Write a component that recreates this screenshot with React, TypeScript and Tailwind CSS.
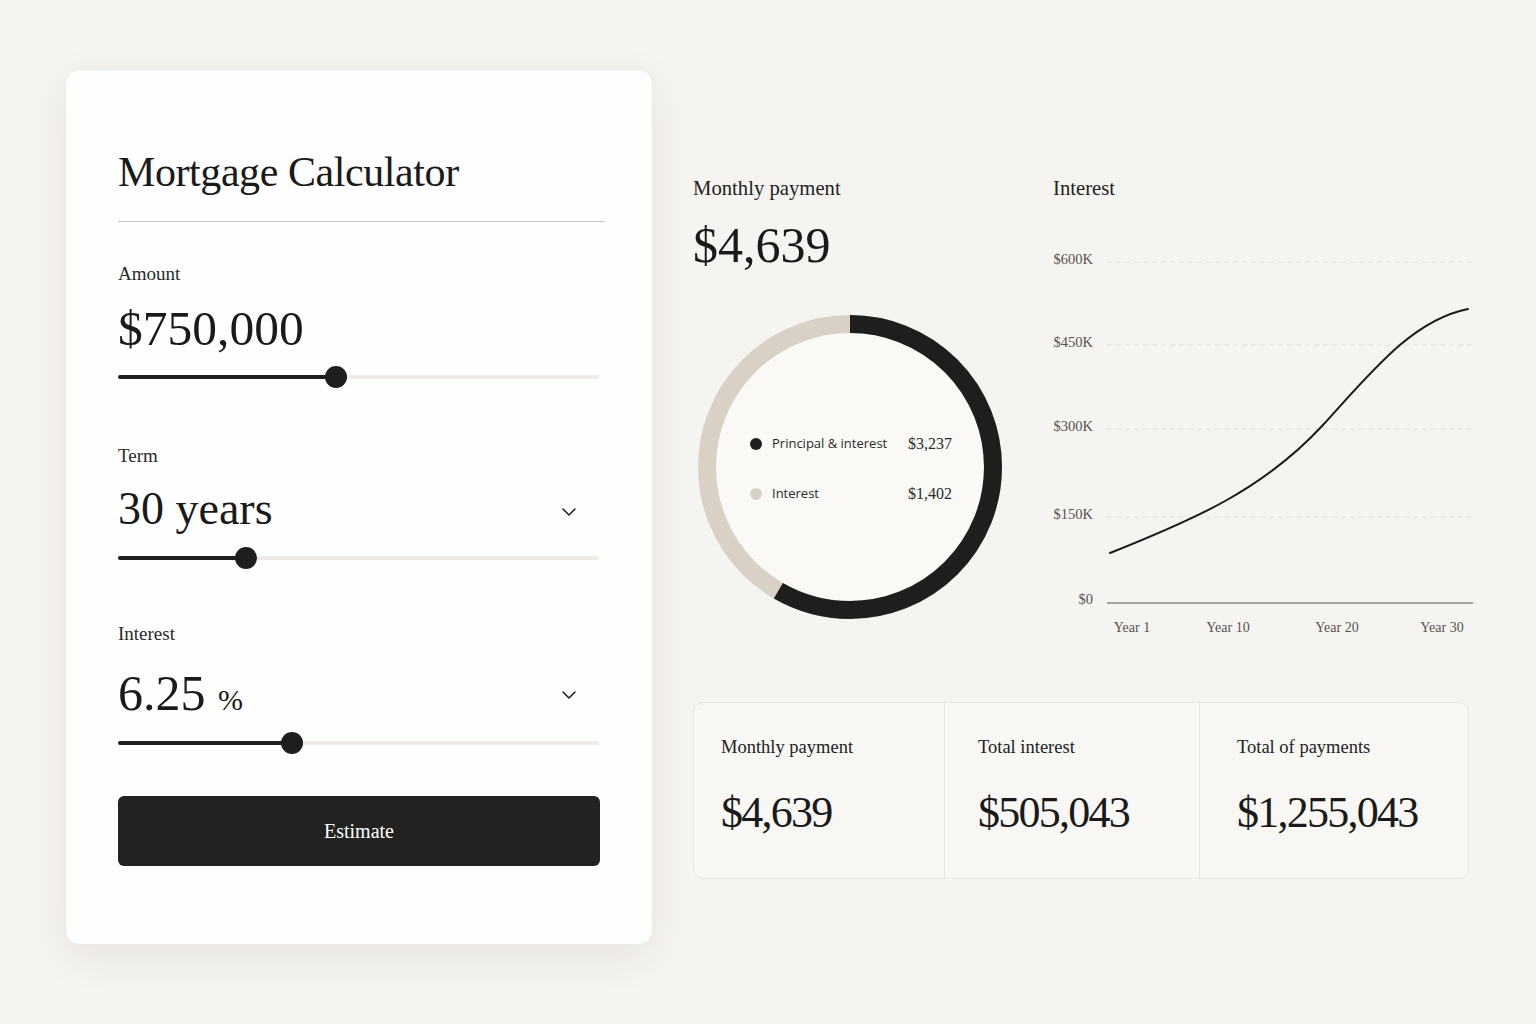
import React from "react";
import { ChevronDown } from "lucide-react";

const serif = { fontFamily: '"Liberation Serif", "Times New Roman", serif' };
const sans = { fontFamily: '"Open Sans", "Noto Sans", sans-serif' };

function Slider({ pct }: { pct: number }) {
  return (
    <div className="relative h-[22px] w-[481px]">
      <div className="absolute left-0 right-0 top-[9px] h-[4px] rounded-full bg-[#efece8]" />
      <div className="absolute left-0 top-[9px] h-[4px] rounded-full bg-[#1e1e1e]" style={{ width: `${pct}%` }} />
      <div
        className="absolute top-0 h-[22px] w-[22px] -translate-x-1/2 rounded-full bg-[#1e1e1e]"
        style={{ left: `${pct}%` }}
      />
    </div>
  );
}

function Donut() {
  const r = 143;
  const c = 2 * Math.PI * r;
  const dark = 210 / 360;
  return (
    <div className="relative ml-[4px] mt-[44px] h-[306px] w-[306px]">
      <svg width="306" height="306" viewBox="0 0 306 306">
        <circle cx="153" cy="153" r={r} fill="#faf9f6" stroke="#d9d1c6" strokeWidth="18" />
        <circle
          cx="153"
          cy="153"
          r={r}
          fill="none"
          stroke="#1e1e1d"
          strokeWidth="18"
          strokeDasharray={`${c * dark} ${c}`}
          transform="rotate(-90 153 153)"
        />
      </svg>
      <div className="absolute left-[53px] top-[119px] flex w-[202px] flex-col gap-[28px]">
        <div className="flex h-[22px] items-center justify-between">
          <div className="flex items-center gap-[10px]">
            <span className="h-[12px] w-[12px] rounded-full bg-[#1e1e1d]" />
            <span className="text-[13px] text-[#2a2a2a]" style={sans}>Principal &amp; interest</span>
          </div>
          <span className="text-[16px] text-[#2a2a2a]" style={serif}>$3,237</span>
        </div>
        <div className="flex h-[22px] items-center justify-between">
          <div className="flex items-center gap-[10px]">
            <span className="h-[12px] w-[12px] rounded-full bg-[#d9d1c6]" />
            <span className="text-[13px] text-[#2a2a2a]" style={sans}>Interest</span>
          </div>
          <span className="text-[16px] text-[#2a2a2a]" style={serif}>$1,402</span>
        </div>
      </div>
    </div>
  );
}

function Chart() {
  const grid = [
    { y: 22, label: "$600K" },
    { y: 105, label: "$450K" },
    { y: 189, label: "$300K" },
    { y: 277, label: "$150K" },
  ];
  const years = [
    { x: 79, t: "Year 1" },
    { x: 175, t: "Year 10" },
    { x: 284, t: "Year 20" },
    { x: 389, t: "Year 30" },
  ];
  return (
    <svg width="420" height="400" viewBox="0 0 420 400" className="mt-[40px]" style={serif}>
      {grid.map((g) => (
        <g key={g.label}>
          <text x="40" y={g.y - 1} textAnchor="end" dominantBaseline="middle" fontSize="14.5" fill="#555350">
            {g.label}
          </text>
          <line x1="54" x2="419" y1={g.y} y2={g.y} stroke="#e4e0da" strokeWidth="1" strokeDasharray="5 4" />
        </g>
      ))}
      <text x="40" y="361" textAnchor="end" dominantBaseline="middle" fontSize="14.5" fill="#555350">$0</text>
      <line x1="54" x2="420" y1="363" y2="363" stroke="#8a8680" strokeWidth="1.5" />
      {years.map((y) => (
        <text key={y.t} x={y.x} y="389" textAnchor="middle" dominantBaseline="middle" fontSize="14" fill="#555350">
          {y.t}
        </text>
      ))}
      <path
        d="M57 313 C140 280 210 250 270 185 C320 130 360 80 415 69"
        fill="none"
        stroke="#1a1a1a"
        strokeWidth="2"
        strokeLinecap="round"
      />
    </svg>
  );
}

function Stat({ label, value, w, pl, border }: { label: string; value: string; w: string; pl: string; border?: boolean }) {
  return (
    <div className={`${w} ${pl} ${border ? "border-l border-[#e8e4de]" : ""} pt-[34px]`}>
      <div className="text-[18.5px] leading-[20px] text-[#222]" style={serif}>{label}</div>
      <div className="mt-[34px] text-[44px] leading-none tracking-[-0.04em] text-[#1a1a1a]" style={serif}>{value}</div>
    </div>
  );
}

export default function App() {
  return (
    <div className="flex min-h-[1024px] w-[1536px] items-start bg-[#f6f4f0] pl-[65px] pt-[69px]" style={serif}>
      {/* Left card */}
      <div className="h-[876px] w-[588px] rounded-[14px] border border-[#eeebe6] bg-[#fefefe] pl-[52px] pt-[81px] shadow-[0_12px_40px_rgba(60,50,40,0.08)]">
        <h1 className="text-[42px] leading-none tracking-[-0.01em] text-[#1a1a1a]">Mortgage Calculator</h1>
        <div className="mt-[28px] h-px w-[487px] bg-[#c9c7c3]" />

        <div className="mt-[42px] text-[19px] leading-[20px] text-[#2a2a2a]">Amount</div>
        <div className="mt-[20px] text-[49.5px] leading-none text-[#1a1a1a]">$750,000</div>
        <div className="mt-[12px]"><Slider pct={45.3} /></div>

        <div className="mt-[58px] text-[19px] leading-[20px] text-[#2a2a2a]">Term</div>
        <div className="mt-[20px] flex w-[482px] items-center justify-between">
          <span className="text-[46px] leading-none text-[#1a1a1a]">30 years</span>
          <ChevronDown size={24} strokeWidth={1.5} className="mr-[19px] mt-[7px] text-[#1a1a1a]" />
        </div>
        <div className="mt-[15px]"><Slider pct={26.6} /></div>

        <div className="mt-[55px] text-[19px] leading-[20px] text-[#2a2a2a]">Interest</div>
        <div className="mt-[24px] flex w-[482px] items-center justify-between">
          <span className="text-[50px] leading-none text-[#1a1a1a]">
            6.25 <span className="text-[30px]">%</span>
          </span>
          <ChevronDown size={24} strokeWidth={1.5} className="mr-[19px] mt-[4px] text-[#1a1a1a]" />
        </div>
        <div className="mt-[14px]"><Slider pct={36.2} /></div>

        <button className="mt-[42px] flex h-[70px] w-[482px] items-center justify-center rounded-[6px] bg-[#222220] text-[20px] text-white">
          Estimate
        </button>
      </div>

      {/* Right area */}
      <div className="ml-[40px] flex w-[780px] flex-col pt-[107px]">
        <div className="flex">
          <div className="flex w-[360px] flex-col">
            <div className="text-[20.7px] leading-[24px] text-[#222]">Monthly payment</div>
            <div className="mt-[20px] text-[50px] leading-none text-[#1a1a1a]">$4,639</div>
            <Donut />
          </div>
          <div className="flex w-[420px] flex-col">
            <div className="text-[20.7px] leading-[24px] text-[#222]">Interest</div>
            <Chart />
          </div>
        </div>

        <div className="mt-[62px] flex h-[177px] w-[776px] rounded-[10px] border border-[#e8e4de] bg-[#f8f7f4]">
          <Stat label="Monthly payment" value="$4,639" w="w-[250px]" pl="pl-[27px]" />
          <Stat label="Total interest" value="$505,043" w="w-[255px]" pl="pl-[33px]" border />
          <Stat label="Total of payments" value="$1,255,043" w="flex-1" pl="pl-[37px]" border />
        </div>
      </div>
    </div>
  );
}
